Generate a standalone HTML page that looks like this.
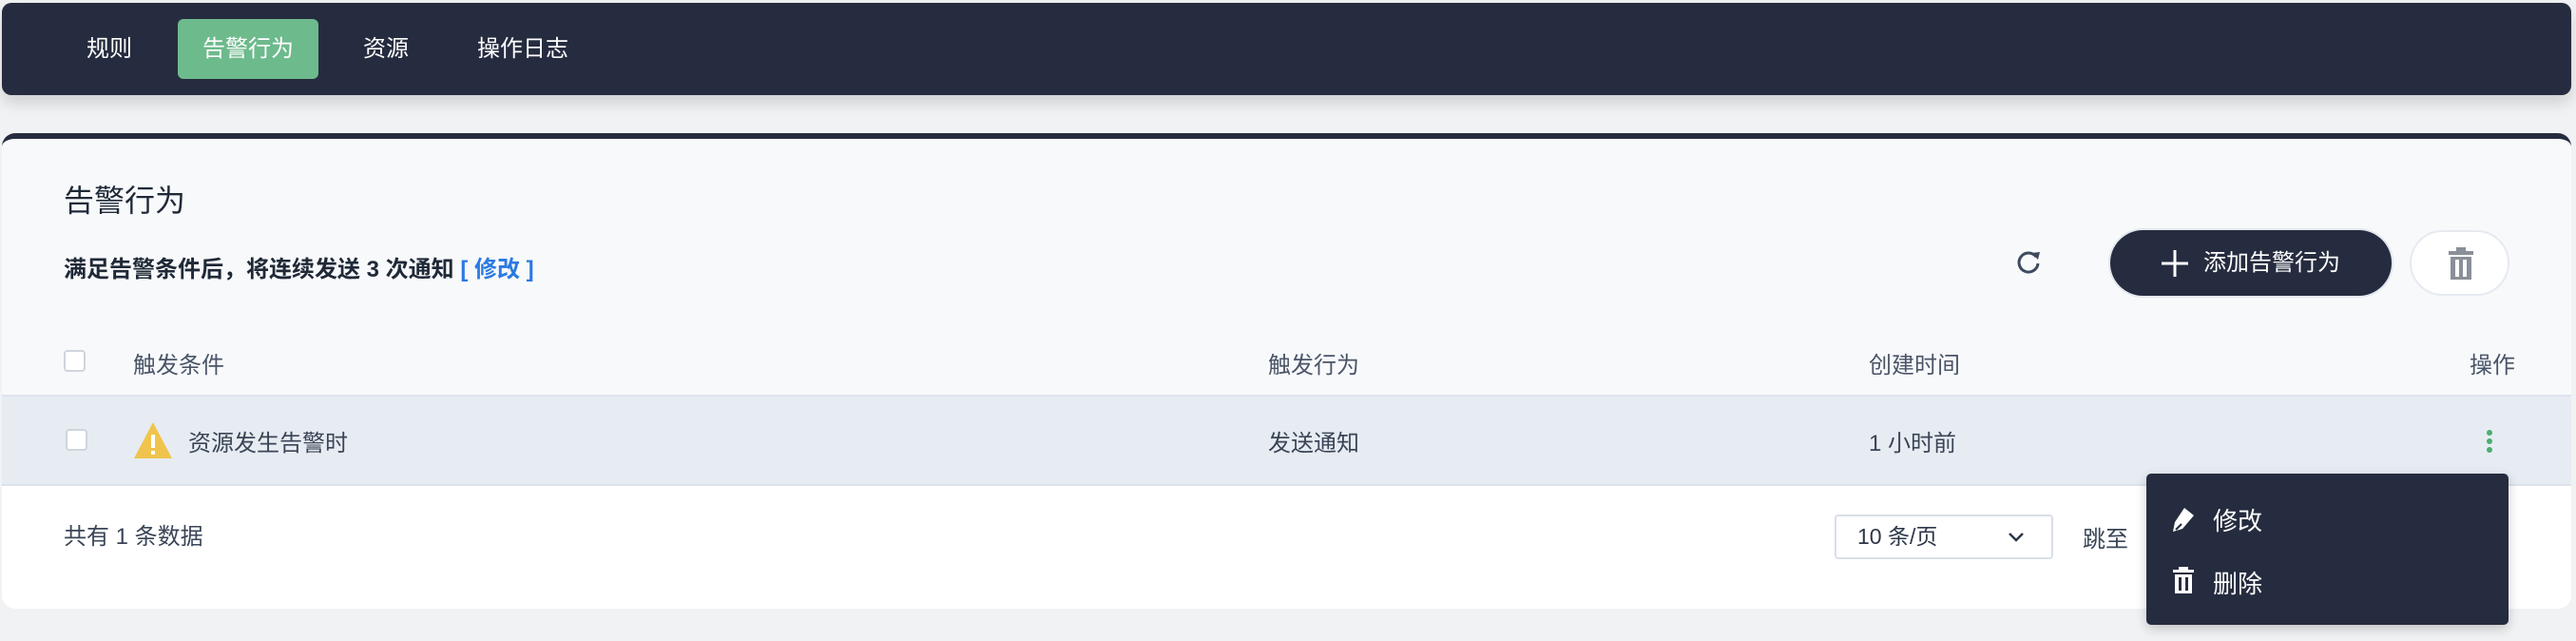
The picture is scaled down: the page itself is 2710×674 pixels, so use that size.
<!DOCTYPE html>
<html><head><meta charset="utf-8"><style>
*{box-sizing:border-box;margin:0;padding:0}
body{width:2710px;height:674px;background:#f1f2f4;font-family:"Liberation Sans","Noto Sans CJK SC",sans-serif;position:relative;overflow:hidden;color:#2d3748}
.abs{position:absolute;white-space:nowrap}
.nav{position:absolute;left:2px;top:3px;width:2703px;height:97px;background:#262c3f;border-radius:10px;box-shadow:0 8px 16px rgba(0,0,0,.15)}
.nav span{position:absolute;top:0;line-height:97px;font-size:24px;color:#fff}
.tab{position:absolute;left:185px;top:17px;width:148px;height:63px;background:#6dba8c;border-radius:6px}
.card{position:absolute;left:2px;top:140px;width:2703px;height:500px;background:#f8f9fb;border-radius:14px;border-top:6px solid #262c3f;overflow:hidden}
.row{position:absolute;left:0;top:269px;width:100%;height:96px;background:#e7ecf3;border-top:2px solid #dde3eb;border-bottom:2px solid #dde3eb}
.foot{position:absolute;left:0;top:365px;width:100%;height:140px;background:#fff}
.cb{position:absolute;width:23px;height:23px;border:2px solid #cfd5dd;border-radius:4px;background:#fff}
.t{font-size:24px;color:#3a4556}
</style></head><body>
<div class="nav">
 <div class="tab"></div>
 <span style="left:89px">规则</span>
 <span style="left:211px">告警行为</span>
 <span style="left:380px">资源</span>
 <span style="left:500px">操作日志</span>
</div>
<div class="card">
 <div class="abs" style="left:65px;top:40px;font-size:32px;color:#1f2937">告警行为</div>
 <div class="abs" style="left:65px;top:117px;font-size:24px;font-weight:bold;color:#1f2937">满足告警条件后，将连续发送 3 次通知 <span style="color:#2a7ae2">[ 修改 ]</span></div>
 <svg class="abs" style="left:2118px;top:114px" width="30" height="30" viewBox="0 0 30 30"><path d="M22 10 A10 10 0 1 0 24 17" fill="none" stroke="#3d4b5e" stroke-width="3"/><path d="M17 6 L26 5 L24 13 Z" fill="#3d4b5e"/></svg>
 <div class="abs" style="left:2218px;top:96px;width:296px;height:69px;background:#262c3f;border-radius:35px;box-shadow:0 0 0 2px #e3e8ee;color:#fff;font-size:24px;line-height:69px">
  <svg style="position:absolute;left:54px;top:21px" width="28" height="28"><path d="M14 0V28M0 14H28" stroke="#fff" stroke-width="3"/></svg>
  <span style="position:absolute;left:98px;top:0">添加告警行为</span></div>
 <div class="abs" style="left:2533px;top:96px;width:105px;height:69px;background:#fff;border-radius:35px;border:2px solid #e6eaf0">
  <svg style="position:absolute;left:38px;top:16px" width="28" height="34" viewBox="0 0 28 34"><rect x="9" y="0" width="10" height="4" fill="#8a8f99"/><rect x="1" y="4" width="26" height="4" fill="#8a8f99"/><path d="M3 10h22v24H3z M8 13v18h4V13z M16 13v18h4V13z" fill="#8a8f99" fill-rule="evenodd"/></svg>
 </div>
 <div class="cb" style="left:65px;top:222px"></div>
 <div class="abs t" style="left:138px;top:218px;color:#4a5568">触发条件</div>
 <div class="abs t" style="left:1332px;top:218px;color:#4a5568">触发行为</div>
 <div class="abs t" style="left:1964px;top:218px;color:#4a5568">创建时间</div>
 <div class="abs t" style="left:2596px;top:218px;color:#4a5568">操作</div>
 <div class="row">
  <div class="cb" style="left:67px;top:34px"></div>
  <svg style="position:absolute;left:138px;top:26px" width="42" height="40" viewBox="0 0 42 40"><path d="M21 1 L41 39 H1 Z" fill="#f0c44c"/><rect x="19" y="14" width="4" height="14" fill="#fff"/><rect x="19" y="31" width="4" height="4" fill="#fff"/></svg>
  <div class="abs t" style="left:196px;top:29px">资源发生告警时</div>
  <div class="abs t" style="left:1332px;top:29px">发送通知</div>
  <div class="abs t" style="left:1964px;top:29px">1 小时前</div>
  <svg style="position:absolute;left:2613px;top:34px" width="8" height="26"><circle cx="4" cy="4" r="3" fill="#4cae6f"/><circle cx="4" cy="13" r="3" fill="#4cae6f"/><circle cx="4" cy="22" r="3" fill="#4cae6f"/></svg>
 </div>
 <div class="foot">
  <div class="abs t" style="left:65px;top:33px">共有 1 条数据</div>
  <div class="abs" style="left:1928px;top:30px;width:230px;height:47px;border:2px solid #d9dfe7;border-radius:4px;background:#fff;font-size:23px;line-height:43px;padding-left:22px;color:#2d3748">10 条/页
   <svg style="position:absolute;right:28px;top:16px" width="18" height="12"><path d="M2 2 L9 9 L16 2" fill="none" stroke="#2d3748" stroke-width="2.5"/></svg></div>
  <div class="abs t" style="left:2189px;top:36px">跳至</div>
 </div>
</div>
<div class="abs" style="left:2258px;top:498px;width:381px;height:159px;background:#262c3f;border-radius:5px;box-shadow:0 4px 12px rgba(0,0,0,.2)">
 <svg style="position:absolute;left:26px;top:34px" width="26" height="28" viewBox="0 0 26 28"><path d="M14 2 L24 10 L12 24 L2 27 L4 17 Z" fill="#fff"/><path d="M5 25 L11 19" stroke="#262c3f" stroke-width="2"/></svg>
 <div class="abs" style="left:70px;top:30px;font-size:26px;color:#fff">修改</div>
 <svg style="position:absolute;left:28px;top:98px" width="22" height="28" viewBox="0 0 22 28"><rect x="6" y="0" width="10" height="3" fill="#fff"/><rect x="0" y="3" width="22" height="3" fill="#fff"/><path d="M2 8h18v20H2z M6 11v14h3V11z M13 11v14h3V11z" fill="#fff" fill-rule="evenodd"/></svg>
 <div class="abs" style="left:70px;top:96px;font-size:26px;color:#fff">删除</div>
</div>
</body></html>
